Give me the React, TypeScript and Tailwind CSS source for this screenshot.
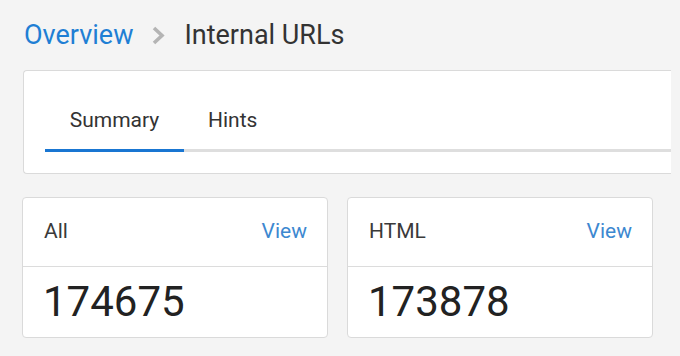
import { ReactNode } from "react";

function Chevron() {
  return (
    <svg width="13" height="19" viewBox="0 0 13 19" className="mx-[19px] shrink-0">
      <path d="M2 2 L10 9.5 L2 17" fill="none" stroke="#b4b4b4" strokeWidth="3.6" />
    </svg>
  );
}

function StatCard({ label, value }: { label: string; value: ReactNode }) {
  return (
    <div className="w-[306px] overflow-hidden rounded-[4px] border border-[#dadada] bg-white">
      <div className="flex h-[69px] items-center justify-between border-b border-[#dcdcdc] pl-[21px] pr-[20px] text-[21px]">
        <span className="text-[#3a3a3a]">{label}</span>
        <a className="cursor-pointer text-[#3d88d0]">View</a>
      </div>
      <div className="flex h-[70px] items-center pl-[20px] text-[42px] leading-none text-[#222]">{value}</div>
    </div>
  );
}

export default function App() {
  return (
    <div className="h-[356px] w-[680px] overflow-hidden bg-[#f4f4f4] pl-[23px] font-['Roboto',sans-serif]">
      <div className="mt-[18px] flex h-[34px] items-center text-[27px] leading-none">
        <a className="cursor-pointer pl-[1px] text-[#1f7fd4]">Overview</a>
        <Chevron />
        <span className="text-[#333]">Internal URLs</span>
      </div>

      <div className="mt-[18px] h-[104px] w-[648px] rounded-l-[4px] border border-r-0 border-[#dadada] bg-white pl-[21px] pt-[30px]">
        <div className="flex text-[21px] text-[#333]">
          <button className="h-[40px] w-[139px] text-center">Summary</button>
          <button className="ml-[24px] h-[40px]">Hints</button>
        </div>
        <div className="mt-[8px] flex h-[3px] bg-[#dedede]">
          <div className="h-[3px] w-[139px] bg-[#1976d2]" />
        </div>
      </div>

      <div className="-ml-[1px] mt-[23px] flex gap-[19px]">
        <StatCard label="All" value="174675" />
        <StatCard label="HTML" value="173878" />
      </div>
    </div>
  );
}
